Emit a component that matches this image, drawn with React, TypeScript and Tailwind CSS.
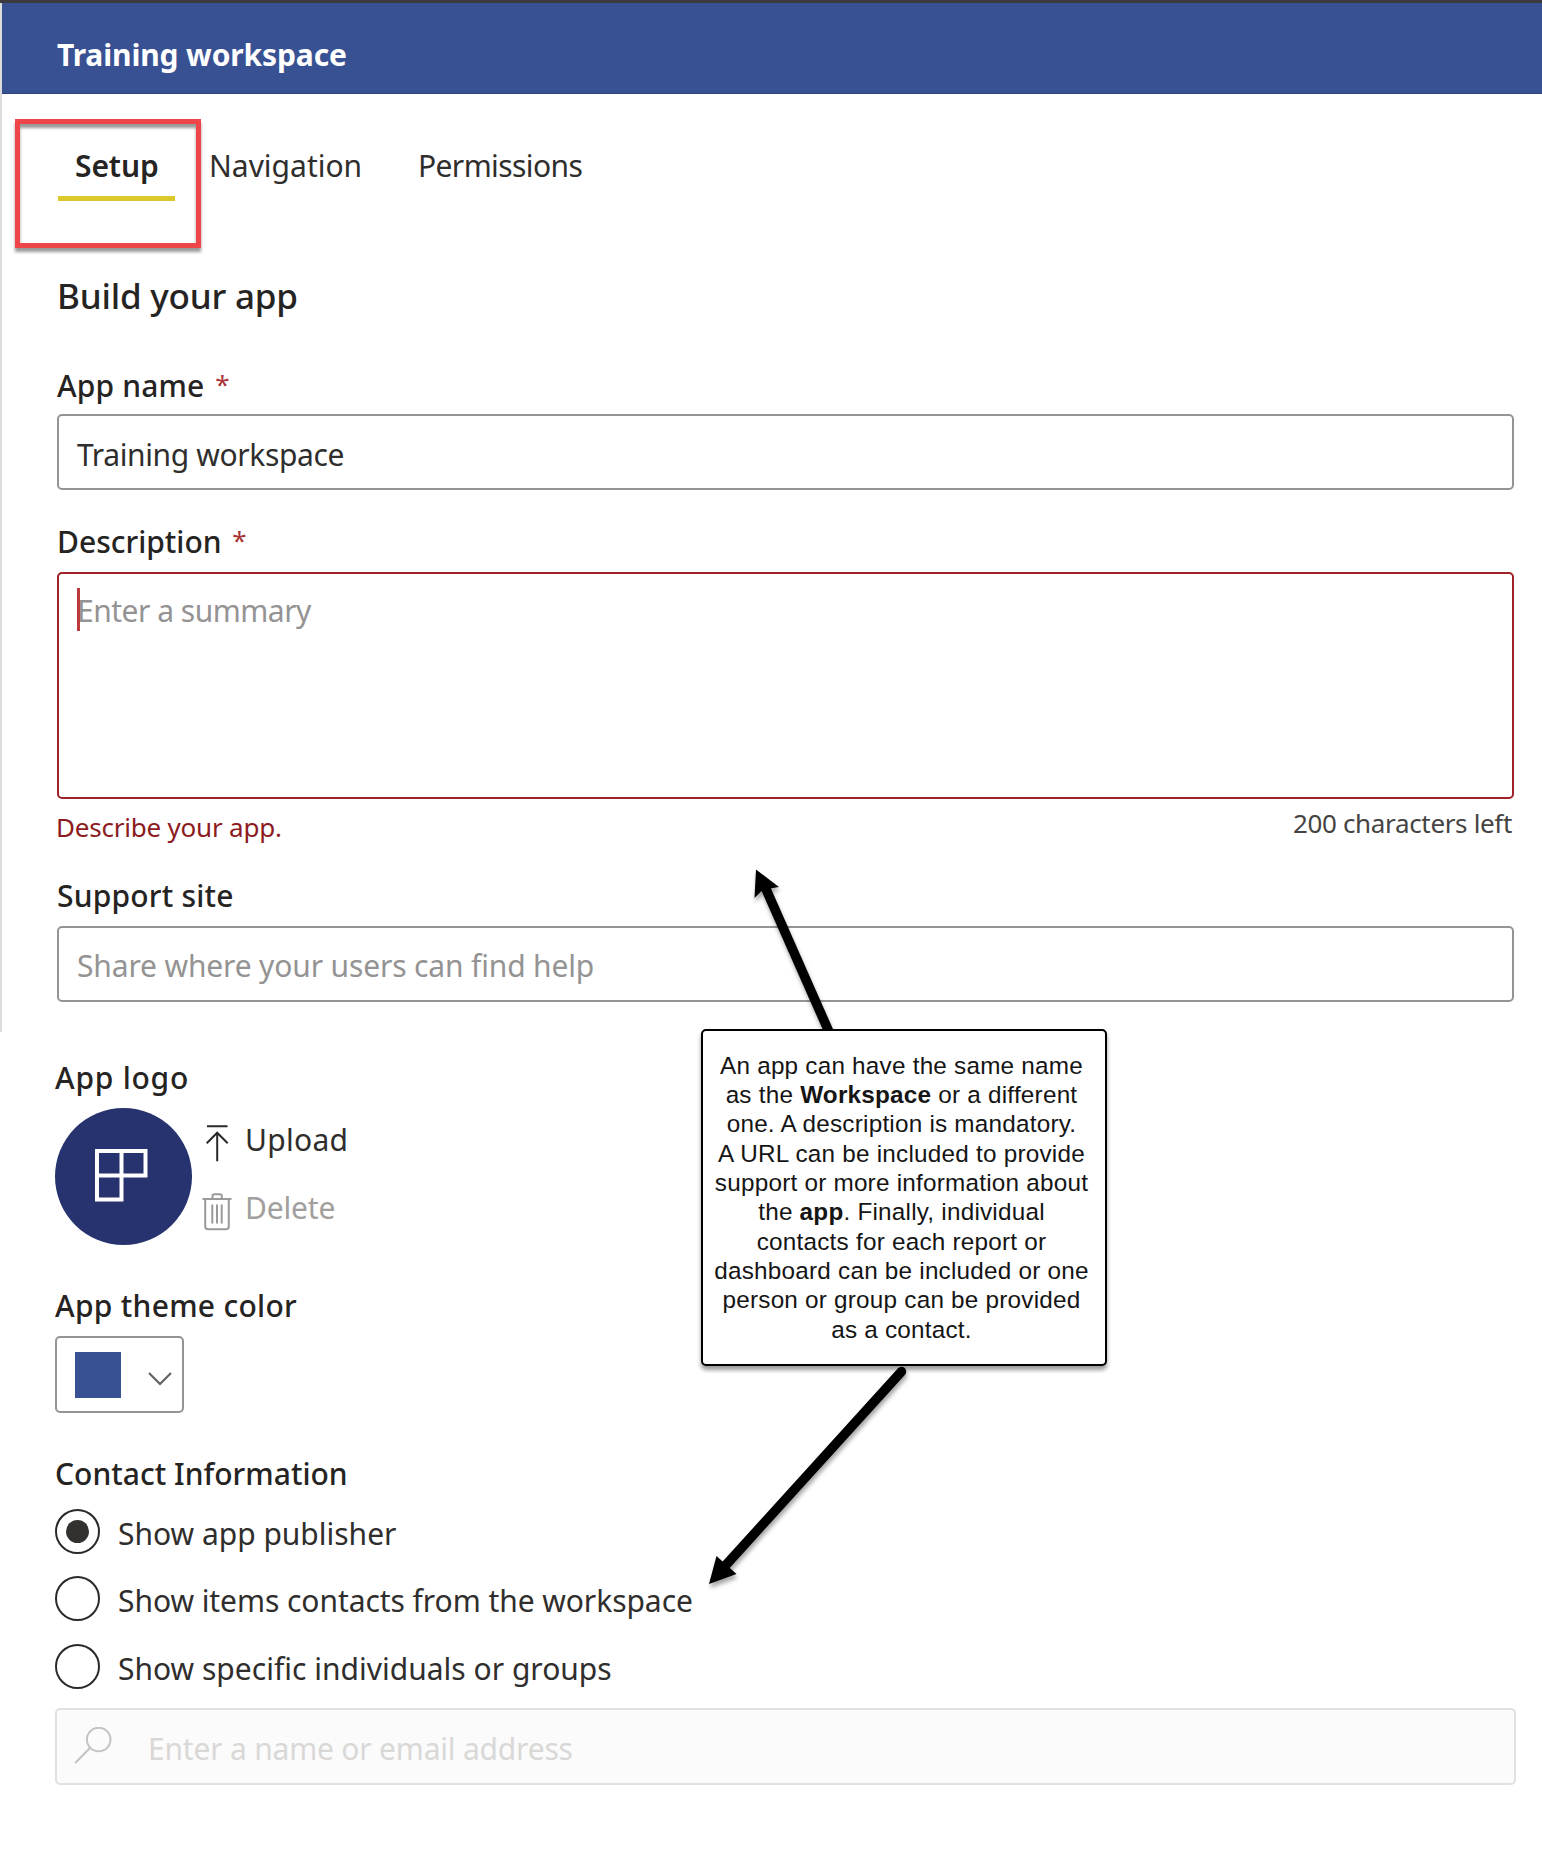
import type { ReactNode } from "react";

function Label({ children, className = "" }: { children: ReactNode; className?: string }) {
  return <div className={`h-10 whitespace-pre text-[30px] font-medium leading-[42px] ${className}`}>{children}</div>;
}

function Required() {
  return <span className="relative -top-[3px] ml-1 text-[26px] font-normal tracking-normal text-[#a83236]"> *</span>;
}

function Radio({ checked, label, tracking }: { checked?: boolean; label: string; tracking: string }) {
  return (
    <div className="flex h-[45px] items-start">
      <span className="flex size-[45px] shrink-0 items-center justify-center rounded-full border-2 border-[#2b2a29] bg-white">
        {checked && <span className="size-[23px] rounded-full bg-[#323130]" />}
      </span>
      <span className={`ml-[18px] mt-1 whitespace-nowrap text-[30px] leading-[42px] text-[#2f2e2d] ${tracking}`}>{label}</span>
    </div>
  );
}

function UploadIcon() {
  return (
    <svg width="30" height="44" viewBox="0 0 30 44" fill="none" stroke="#2b2a29" strokeWidth="2">
      <path d="M5 7.2H25.5M15.2 13.5V42.3M4.7 24.2L15.2 13.7L25.7 24.2" />
    </svg>
  );
}

function TrashIcon() {
  return (
    <svg width="30" height="44" viewBox="0 0 30 44" fill="none" stroke="#9b9a99" strokeWidth="2">
      <path d="M0.5 12H29.5M10.5 12V9Q10.5 7.2 12.3 7.2H18Q19.8 7.2 19.8 9V12M3.2 12V39.5Q3.2 42.3 6 42.3H24Q26.8 42.3 26.8 39.5V12M10.3 17.5V36.5M15 17.5V36.5M19.7 17.5V36.5" />
    </svg>
  );
}

export default function App() {
  return (
    <div className="relative h-[1866px] w-[1542px] overflow-hidden bg-white font-['Noto_Sans',sans-serif] text-[#252423]">
      <div className="h-[3px] bg-[#3b3a3c]" />
      <header className="ml-[2px] flex h-[91px] items-start border-b border-[#2c4580] bg-[#385193] pl-[55px] pt-8">
        <h1 className="text-[30px] font-bold leading-10 tracking-[-0.13px] text-white">Training workspace</h1>
      </header>
      <div className="absolute left-0 top-[3px] h-[1029px] w-[2px] bg-[#dcdcdc]" />

      <main className="flex flex-col pl-[57px] pt-[51px]">
        <nav className="flex h-14 text-[30px] leading-[42px] text-[#2f2e2d]">
          <div className="relative ml-px flex w-[117px] flex-col">
            <span className="pl-[17px] font-semibold tracking-[-0.09px] text-[#252423]">Setup</span>
            <span className="mt-[9px] h-[5px] bg-[#dcc82a]" />
            <div className="absolute -left-[43px] -top-[26px] h-[129px] w-[186px] border-[5px] border-[#ee4548] shadow-[0_4px_3px_rgba(0,0,0,0.4),inset_0_4px_3px_rgba(0,0,0,0.4)]" />
          </div>
          <span className="ml-[34px] w-[209px]">Navigation</span>
          <span className="tracking-[-0.6px]">Permissions</span>
        </nav>

        <h2 className="mt-[70px] h-12 text-[35px] font-medium leading-[50px] tracking-[-0.2px]">Build your app</h2>

        <Label className="mt-[46px] tracking-[0.15px]">App name<Required /></Label>
        <div className="mt-[9px] flex h-[76px] w-[1457px] items-center rounded-[5px] border-2 border-[#959493] pl-[18px] pt-1.5">
          <span className="text-[30px] leading-10 tracking-[-0.37px] text-[#2f2e2d]">Training workspace</span>
        </div>

        <Label className="mt-[31px]">Description<Required /></Label>
        <div className="relative mt-[11px] h-[227px] w-[1457px] rounded-[5px] border-2 border-[#a02226] pl-[18px] pt-4">
          <span className="absolute left-[18px] top-[14px] h-[43px] w-[3px] bg-[#bc3a3c]" />
          <span className="block text-[30px] leading-[42px] tracking-[-0.5px] text-[#949393]">Enter a summary</span>
        </div>
        <div className="mt-2 flex h-9 w-[1457px] items-start justify-between text-[26px] leading-8">
          <span className="-ml-px mt-1 tracking-[-0.21px] text-[#8c1a1e]">Describe your app.</span>
          <span className="mr-0.5 tracking-[-0.34px] text-[#454443]">200 characters left</span>
        </div>

        <Label className="mt-8 tracking-[0.2px]">Support site</Label>
        <div className="mt-[11px] flex h-[76px] w-[1457px] items-center rounded-[5px] border-2 border-[#959493] pl-[18px] pt-1">
          <span className="text-[30px] leading-10 tracking-[-0.15px] text-[#949393]">Share where your users can find help</span>
        </div>

        <div className="-ml-[2px] flex flex-col">
          <Label className="mt-[55px] tracking-[0.75px]">App logo</Label>
          <div className="mt-[11px] flex h-[137px]">
            <div className="size-[137px] rounded-full bg-[#27336e]">
              <svg width="137" height="137" viewBox="0 0 137 137" fill="none" stroke="#fff" strokeWidth="4">
                <path d="M42 43H90.5V67.5H42ZM42 43V91.5H66.5V43" />
              </svg>
            </div>
            <div className="ml-[10px] flex flex-col gap-6 pt-[11px] text-[30px] leading-[42px]">
              <div className="flex h-11 items-start gap-[13px]"><UploadIcon /><span className="tracking-[0.28px] text-[#2f2e2d]">Upload</span></div>
              <div className="flex h-11 items-start gap-[13px]"><TrashIcon /><span className="tracking-[-0.16px] text-[#a19f9d]">Delete</span></div>
            </div>
          </div>

          <Label className="mt-10 tracking-[0.28px]">App theme color</Label>
          <div className="mt-[11px] flex h-[77px] w-[129px] items-center rounded-[5px] border-2 border-[#959493] pl-[18px]">
            <span className="size-[46px] bg-[#385193]" />
            <svg className="ml-[27px] mt-2" width="24" height="14" viewBox="0 0 24 14" fill="none" stroke="#605e5c" strokeWidth="2">
              <path d="M1 1L12 12L23 1" />
            </svg>
          </div>

          <Label className="mt-10 tracking-[0.02px]">Contact Information</Label>
          <div className="mt-4 flex flex-col gap-[22.3px]">
            <Radio checked label="Show app publisher" tracking="tracking-[-0.01px]" />
            <Radio label="Show items contacts from the workspace" tracking="tracking-[-0.06px]" />
            <Radio label="Show specific individuals or groups" tracking="tracking-[0.01px]" />
          </div>

          <div className="mt-[19px] flex h-[77px] w-[1461px] items-center rounded-[5px] border-2 border-[#e1e1e1] bg-[#fbfbfb] pl-[17px]">
            <svg width="38" height="38" viewBox="0 0 38 38" fill="none" stroke="#c4c3c2" strokeWidth="2">
              <circle cx="24.7" cy="12.5" r="11.8" />
              <path d="M16.2 20.8L1.2 36" />
            </svg>
            <span className="ml-9 mt-[5px] text-[30px] leading-10 tracking-[-0.2px] text-[#d9d8d7]">Enter a name or email address</span>
          </div>
        </div>
      </main>

      {/* Annotation arrows and note laid over the form */}
      <svg className="absolute left-0 top-0 drop-shadow-[1px_4px_2px_rgba(0,0,0,0.35)]" width="1542" height="1866" viewBox="0 0 1542 1866">
        <path d="M765.5 888L829.5 1033" stroke="#000" strokeWidth="9.5" />
        <path d="M756 869.5L779 887L767 889L761 891.5L754.5 898Z" fill="#000" />
        <path d="M901.5 1371.5L725 1566" stroke="#000" strokeWidth="9.5" strokeLinecap="round" />
        <path d="M709 1584L716.5 1556L736.5 1574Z" fill="#000" />
      </svg>
      <aside className="absolute left-[700.5px] top-[1029px] h-[337px] w-[406px] rounded-[5px] border-2 border-black bg-white pt-[19.5px] text-center font-['Liberation_Sans',Arial,sans-serif] text-[24.3px] leading-[29.35px] tracking-[0.22px] text-[#151515] shadow-[0_4px_4px_rgba(0,0,0,0.4)]">
        <div className="-ml-1 whitespace-nowrap">
          An app can have the same name<br />
          as the <b>Workspace</b> or a different<br />
          one. A description is mandatory.<br />
          A URL can be included to provide<br />
          support or more information about<br />
          the <b>app</b>. Finally, individual<br />
          contacts for each report or<br />
          dashboard can be included or one<br />
          person or group can be provided<br />
          as a contact.
        </div>
      </aside>
    </div>
  );
}
